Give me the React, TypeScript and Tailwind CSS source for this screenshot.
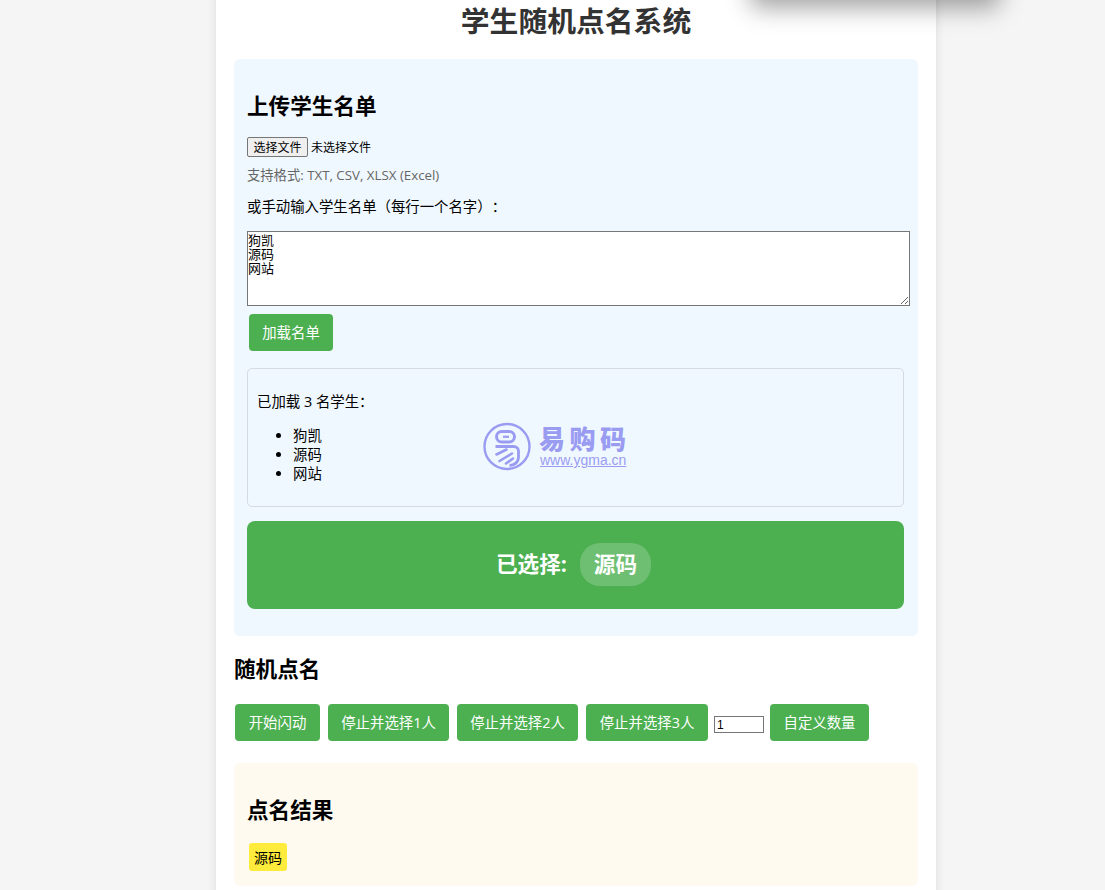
import React from 'react';

const actions = [
  { label: '开始闪动', width: 'w-[85px]' },
  { label: '停止并选择1人', width: 'w-[121px]' },
  { label: '停止并选择2人', width: 'w-[121px]' },
  { label: '停止并选择3人', width: 'w-[122px]' },
];

const students = ['狗凯', '源码', '网站'];

function GreenButton({ label, className = '' }: { label: string; className?: string }) {
  return (
    <button className={`h-[37px] whitespace-nowrap rounded-[4px] bg-[#4caf50] text-center text-[14.4px] text-white ${className}`}>
      {label}
    </button>
  );
}

function Watermark() {
  return (
    <div className="pointer-events-none absolute left-[235px] top-[53px] flex items-start gap-[8px] text-[#9a9cf2]">
      <svg width="48" height="49" viewBox="0 0 48 49" fill="none" stroke="currentColor">
        <circle cx="24" cy="24.5" r="22.5" strokeWidth="2.4" />
        <rect x="13.5" y="9.5" width="18" height="10.5" rx="5.2" strokeWidth="3" />
        <path d="M20 14.8h6" strokeWidth="2.2" />
        <path d="M12.5 24.5h18c3 0 5 1.8 5 4.5v6c0 5-4 8.5-9 8.5" strokeWidth="2.8" />
        <path d="M13.5 32.5l10-5M16.5 39l12.5-7.5M23 41.5l7-5" strokeWidth="2.6" strokeLinecap="round" />
      </svg>
      <div className="flex flex-col pt-[1px]">
        <span className="whitespace-nowrap text-[26px] font-black leading-[30px] tracking-[4.5px] font-['Noto_Sans_CJK_SC',sans-serif]">
          易购码
        </span>
        <span className="ml-[1px] whitespace-nowrap text-[14px] leading-[14px] underline font-['Liberation_Sans',sans-serif]">
          www.ygma.cn
        </span>
      </div>
    </div>
  );
}

export default function App() {
  return (
    <div className="relative h-screen overflow-hidden bg-[#f5f5f5] text-[14.4px] text-black [text-spacing-trim:space-all] font-['Open_Sans','Noto_Sans_CJK_SC',sans-serif]">
      <div className="absolute left-[750px] top-[-40px] z-10 h-[40px] w-[250px] rounded-[8px] bg-white shadow-[0_8px_24px_rgba(0,0,0,0.36)]" />
      <main className="relative ml-[216px] mt-[-20px] w-[720px] bg-white px-[18px] pt-[20px] shadow-[0_0_10px_rgba(0,0,0,0.1)]">
        <h1 className="mb-[18px] h-[41px] text-center text-[28.8px] font-bold leading-[42px] text-[#333]">
          学生随机点名系统
        </h1>

        <section className="rounded-[6px] bg-[#f0f8ff] px-[13px] pb-[27px] pt-[32px]">
          <h2 className="mt-[-1px] text-[21.6px] font-bold leading-[32px]">上传学生名单</h2>

          <div className="mt-[15px] flex h-[20px] items-center">
            <button className="h-[20px] w-[61px] rounded-[2px] border border-[#767676] bg-[#efefef] pt-[1px] text-center text-[12px] leading-[18px]">
              选择文件
            </button>
            <span className="ml-[3px] pt-[1px] text-[12px]">未选择文件</span>
          </div>

          <p className="mt-[9px] h-[19px] text-[13.3px] leading-[19px] text-[#666]">支持格式: TXT, CSV, XLSX (Excel)</p>
          <p className="mt-[13px] h-[19px] text-[14.4px] leading-[17px]">或手动输入学生名单（每行一个名字）：</p>

          <textarea
            readOnly
            defaultValue={'狗凯\n源码\n网站'}
            className="mt-[14px] block h-[75px] w-[663px] border border-[#767676] bg-white px-0 py-[1px] text-[13px] leading-[14px] outline-none"
          />

          <GreenButton label="加载名单" className="ml-[2px] mt-[8px] block w-[84px]" />

          <div className="relative mt-[17px] h-[139px] w-[657px] rounded-[5px] border border-[#d6dbe3] px-[9px] pt-[23px]">
            <p className="h-[19px] leading-[19px]">已加载 3 名学生：</p>
            <ul className="mt-[15px] list-disc pl-[36px]">
              {students.map((name) => (
                <li key={name} className="h-[19px] leading-[19px]">
                  {name}
                </li>
              ))}
            </ul>
            <Watermark />
          </div>

          <div className="mt-[14px] flex h-[88px] w-[657px] items-center justify-center rounded-[8px] bg-[#4caf50] pb-[2px] pr-[4px] text-[21.6px] font-bold text-white">
            <span>已选择:</span>
            <span className="ml-[13px] flex h-[43px] w-[71px] items-center justify-center rounded-[20px] bg-white/20">
              源码
            </span>
          </div>
        </section>

        <h2 className="mt-[17px] text-[21.6px] font-bold leading-[32px]">随机点名</h2>

        <div className="mt-[19px] flex items-center pl-[1px]">
          {actions.map((a) => (
            <GreenButton key={a.label} label={a.label} className={`mr-[8px] ${a.width}`} />
          ))}
          <input
            readOnly
            defaultValue="1"
            className="ml-[-2px] mt-[4px] h-[17px] w-[50px] border border-[#767676] bg-white px-[2px] text-[12px] leading-[15px] outline-none font-['Liberation_Sans',sans-serif]"
          />
          <GreenButton label="自定义数量" className="ml-[6px] w-[99px]" />
        </div>

        <section className="mt-[22px] h-[123px] rounded-[6px] bg-[#fffaf0] pt-[31px]">
          <h2 className="pl-[13px] text-[21.6px] font-bold leading-[32px]">点名结果</h2>
          <div className="ml-[15px] mt-[17px] flex h-[28px] w-[38px] items-center justify-center rounded-[3px] bg-[#ffeb3b] text-[14px]">
            源码
          </div>
        </section>
        <div className="h-[40px]" />
      </main>
    </div>
  );
}
